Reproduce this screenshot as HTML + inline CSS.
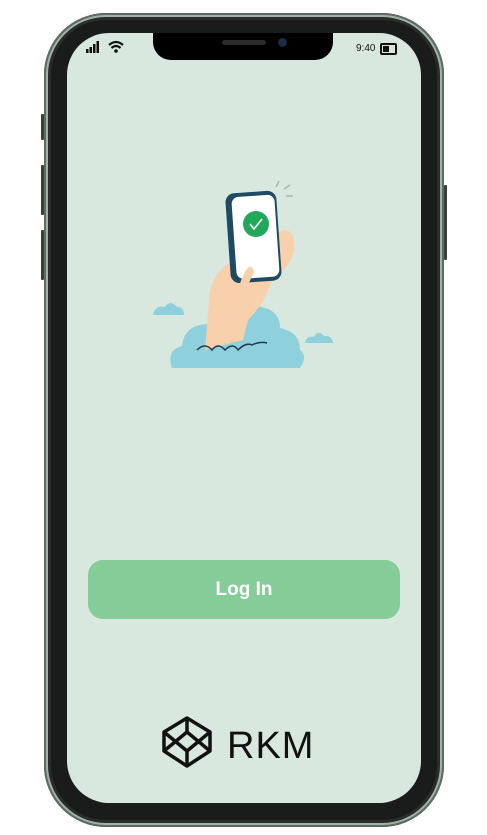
<!DOCTYPE html>
<html><head><style>
html,body{margin:0;padding:0;background:#fff;}
body{width:487px;height:835px;position:relative;overflow:hidden;font-family:"Liberation Sans",sans-serif;}
.frame{position:absolute;left:44px;top:13px;width:400px;height:814px;border-radius:62px;background:#1a1c1b;box-shadow:inset 0 0 0 2px #5d6b63,inset 0 0 0 4px #9fb3a8,inset 0 0 0 7px #2a2d2b;}
.screen{position:absolute;left:67px;top:33px;width:354px;height:770px;border-radius:42px;background:#d8e8df;overflow:hidden;}
.notch{position:absolute;left:86px;top:0;width:180px;height:27px;background:#000;border-radius:0 0 18px 18px;}
.btn{position:absolute;left:21px;top:527px;width:312px;height:59px;border-radius:15px;background:#86cc99;color:#fff;font-weight:bold;font-size:19px;text-align:center;line-height:59px;}
.side{position:absolute;background:#3a403c;width:3px;border-radius:1px;}
</style></head><body>
<div class="side" style="left:41px;top:114px;height:26px"></div>
<div class="side" style="left:41px;top:165px;height:50px"></div>
<div class="side" style="left:41px;top:230px;height:50px"></div>
<div class="side" style="left:444px;top:185px;height:75px"></div>
<div class="frame"></div>
<div class="screen">
  <div class="notch">
    <div style="position:absolute;left:69px;top:7px;width:44px;height:5px;border-radius:3px;background:#2a2a2a"></div>
    <div style="position:absolute;left:125px;top:5px;width:9px;height:9px;border-radius:50%;background:#1b2a45"></div>
  </div>
  <svg style="position:absolute;left:18px;top:6px" width="40" height="16" viewBox="0 0 40 16">
    <rect x="1" y="10" width="2.5" height="4" fill="#111"/><rect x="4.5" y="8" width="2.5" height="6" fill="#111"/><rect x="8" y="5" width="2.5" height="9" fill="#111"/><rect x="11.5" y="2" width="2.5" height="12" fill="#111"/>
    <path d="M24 6 Q31 0 38 6" stroke="#111" stroke-width="2.2" fill="none"/><path d="M26.5 9 Q31 5 35.5 9" stroke="#111" stroke-width="2.2" fill="none"/><circle cx="31" cy="12" r="1.8" fill="#111"/>
  </svg>
  <div style="position:absolute;left:289px;top:10px;font-size:10px;color:#111">9:40</div>
  <div style="position:absolute;left:313px;top:10px;width:13px;height:8px;border:2px solid #111;border-radius:2px"><div style="width:6px;height:6px;margin:1px;background:#111"></div></div>
  <svg style="position:absolute;left:73px;top:140px" width="200" height="200" viewBox="140 173 200 200">
    <path d="M153 315 q2-10 12-8 q5-8 12 0 q7 0 7 8z" fill="#8ed0dc"/>
    <path d="M305 343 q2-8 9-6 q4-8 10-1 q8-1 9 7z" fill="#8ed0dc"/>
    <path d="M172 368 q-6-18 10-22 q2-22 28-22 q8-20 40-18 q30 0 30 22 q20 4 20 22 q8 6 0 18z" fill="#8ed0dc"/>
    <path d="M205 350 L210 290 q8-25 28-30 l45-30 q15 0 10 25 q-5 15-20 20 q-5 25-25 45 l-5 20z" fill="#f8d0ab"/>
    <path d="M197 350 q8-8 15 0 q6-8 13 0 q8-8 13 0 q8-8 14 -5 q8-4 15-2" stroke="#1f3b55" stroke-width="1.5" fill="none"/>
    <rect x="228" y="192" width="51" height="90" rx="9" fill="#1f4a63" transform="rotate(-4 253 237)"/>
    <rect x="234" y="196" width="43" height="82" rx="7" fill="#fff" transform="rotate(-4 253 237)"/>
    <circle cx="256" cy="224" r="13" fill="#22a85a"/>
    <path d="M250 224 l4 5 l8-10" stroke="#fff" stroke-width="1.6" fill="none"/>
    <path d="M246 270 q6-8 8 2 l-14 30 q-6-10 6-32z" fill="#f8d0ab"/>
    <path d="M276 187 l3-6 M284 189 l6-4 M286 196 l7 0" stroke="#aab6b0" stroke-width="1.5"/>
  </svg>
  <div class="btn">Log In</div>
  <svg style="position:absolute;left:93px;top:682px" width="54" height="54" viewBox="0 0 54 54">
    <g stroke="#111" stroke-width="3.5" fill="none" stroke-linejoin="round">
      <path d="M27 3 L50 17 L50 36 L27 51 L4 36 L4 17Z"/>
      <path d="M27 3 L27 17 M4 17 L27 36 L50 17 M4 36 L27 17 L50 36 M27 36 L27 51"/>
    </g>
  </svg>
  <div style="position:absolute;left:160px;top:692px;font-size:38px;color:#111;letter-spacing:1px">RKM</div>
</div>
</body></html>
